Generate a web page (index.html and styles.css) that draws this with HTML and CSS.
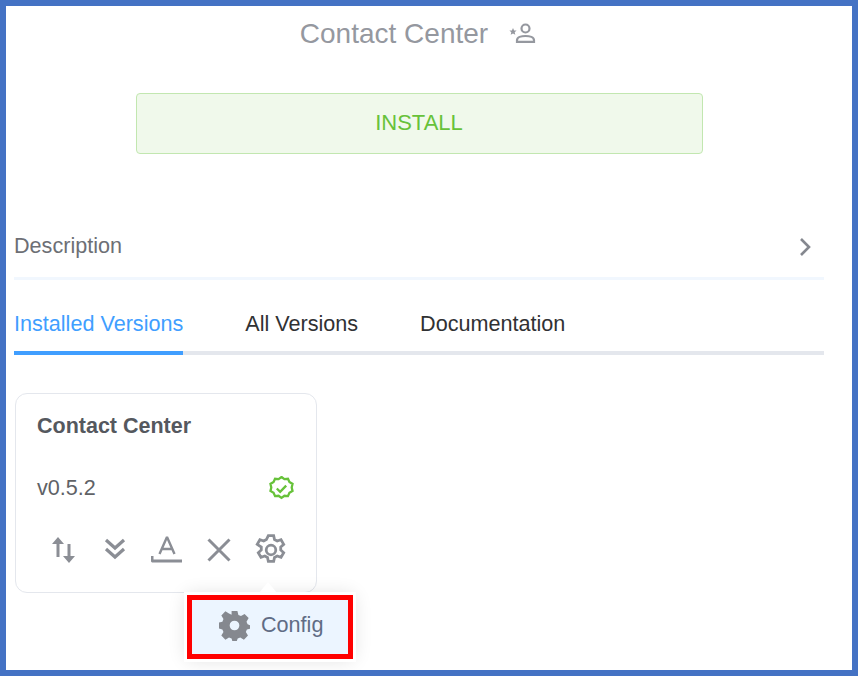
FILE: index.html
```html
<!DOCTYPE html>
<html lang="en">
<head>
  <meta charset="UTF-8">
  <title>Contact Center</title>
  <link rel="stylesheet" href="styles.css">
</head>
<body>
  <main class="frame">
    <div class="title-row">
      <h1>Contact Center</h1>
      <svg class="title-icon" viewBox="0 0 27 20" fill="none" stroke="currentColor" stroke-width="2.200">
        <circle cx="16.500" cy="5.500" r="4"></circle>
        <path d="M8 18.800v-1.600c0-2.800 4.300-4.200 8.500-4.200s8.500 1.400 8.500 4.200v1.600z"></path>
        <path d="M4 5l1.100 2.400 2.500.2-1.900 1.700.6 2.500L4 10.500l-2.300 1.300.6-2.500L.4 7.600l2.500-.2z" fill="currentColor" stroke="none"></path>
      </svg>
    </div>

    <button class="install-btn">INSTALL</button>

    <div class="description">
      <span>Description</span>
      <svg class="chevron" viewBox="0 0 14 20" fill="none" stroke="currentColor" stroke-width="2.600">
        <path d="M3 2l8 8-8 8"></path>
      </svg>
    </div>

    <nav class="tabs">
      <a class="tab active">Installed Versions</a>
      <a class="tab">All Versions</a>
      <a class="tab">Documentation</a>
    </nav>

    <section class="card">
      <h2>Contact Center</h2>
      <div class="version-row">
        <span>v0.5.2</span>
        <svg class="badge" viewBox="0 0 24 24" fill="none" stroke="currentColor" stroke-width="2.200">
          <path d="M12 1l2.800 2 3.400-.3 1.400 3.100 3 1.800-.8 3.400.8 3.400-3 1.800-1.400 3.100-3.400-.3-2.800 2-2.800-2-3.400.3-1.400-3.100-3-1.800.8-3.400-.8-3.400 3-1.800 1.400-3.100 3.400.3z"></path>
          <path d="M7.500 12l3.200 3.200 5.800-6"></path>
        </svg>
      </div>
      <div class="actions">
        <svg class="action" viewBox="0 0 32 32" fill="currentColor">
          <path d="M11 3l6 7h-4.500v13h-3V10H5z"></path>
          <path d="M22 29l-6-7h4.500V10h3v12H28z"></path>
        </svg>
        <svg class="action" viewBox="0 0 32 32" fill="none" stroke="currentColor" stroke-width="3.200">
          <path d="M7 6l9 8 9-8"></path>
          <path d="M7 15l9 8 9-8"></path>
        </svg>
        <svg class="action" viewBox="0 0 32 32" fill="none" stroke="currentColor" stroke-width="2.400" stroke-linejoin="bevel">
          <path d="M8.500 20L16 3l7.500 17M11 15h10"></path>
          <path d="M1 22v5h30" stroke-width="3"></path>
        </svg>
        <svg class="action" viewBox="0 0 32 32" fill="none" stroke="currentColor" stroke-width="3">
          <path d="M5.500 5.500l21 21M26.500 5.500l-21 21"></path>
        </svg>
        <svg class="action" viewBox="1 1 30 30" fill="none" stroke="currentColor" stroke-width="2.600">
          <path d="M13.500 2.500h5l.8 3.700 2.500 1.400 3.600-1.200 2.500 4.300-2.800 2.500v2.800l2.800 2.500-2.500 4.300-3.600-1.200-2.500 1.400-.8 3.700h-5l-.8-3.700-2.500-1.400-3.600 1.200-2.500-4.300 2.800-2.500v-2.800L3.100 10.700l2.500-4.300 3.600 1.200 2.500-1.400z"></path>
          <circle cx="16" cy="16" r="4.500"></circle>
        </svg>
      </div>
    </section>

    <div class="tooltip">
      <div class="tooltip-inner">
        <svg class="config-icon" viewBox="0 0 32 32" fill="currentColor" fill-rule="evenodd">
          <path d="M13 1h6l1 4.200 2.700 1.100 3.700-2.200 4.200 4.200-2.200 3.700 1.100 2.700L33 16v0l0 3-4.200 1-1.100 2.700 2.200 3.700-4.200 4.200-3.700-2.200-2.700 1.100L18 33h-4l-1-3.500-2.700-1.100-3.700 2.200-4.200-4.200 2.200-3.700-1.100-2.700L-1 19v-6l4.500-1 1.100-2.700-2.200-3.700 4.200-4.200 3.700 2.200L13 5zM16 11a5 5 0 100 10 5 5 0 000-10z"></path>
        </svg>
        <span>Config</span>
      </div>
    </div>
  </main>
</body>
</html>
```

FILE: styles.css
```css
* {
  margin: 0;
  padding: 0;
  box-sizing: border-box;
}

body {
  font-family: 'Liberation Sans', Arial, sans-serif;
  background-color: #ffffff;
}

.frame {
  position: relative;
  width: 858px;
  height: 676px;
  border: 6px solid #4472c4;
  padding: 0 28px 0 8px;
  overflow: hidden;
}

.title-row {
  display: flex;
  justify-content: center;
  align-items: center;
  gap: 21px;
  height: 56px;
  color: #95989f;
  padding-right: 2px;
}

h1 {
  font-size: 28px;
  font-weight: 400;
}

.title-icon {
  width: 27px;
  height: 20px;
  margin-bottom: 2px;
}

.install-btn {
  display: block;
  width: 567px;
  height: 61px;
  margin: 31px auto 0;
  padding-bottom: 2px;
  background-color: #f0f9eb;
  border: 1px solid #c2e7b0;
  border-radius: 4px;
  color: #67c23a;
  font-family: inherit;
  font-size: 22px;
}

.description {
  display: flex;
  justify-content: space-between;
  align-items: center;
  height: 66px;
  margin-top: 60px;
  padding: 0 12px 0 0;
  border-bottom: 3px solid #f1f7fe;
  color: #6d6f75;
  font-size: 21.600px;
}

.description span {
  padding-top: 1px;
}

.chevron {
  width: 14px;
  height: 20px;
  margin-top: 2px;
  color: #85888f;
}

.tabs {
  display: flex;
  gap: 62px;
  height: 75px;
  border-bottom: 4px solid #e4e7ed;
}

.tab {
  height: 75px;
  padding-top: 31px;
  font-size: 21.600px;
  color: #303133;
}

.tab.active {
  color: #409eff;
  border-bottom: 4px solid #409eff;
}

.card {
  width: 302px;
  height: 200px;
  margin: 38px 0 0 1px;
  padding: 20px 22px 0 21px;
  border: 1px solid #e4e7ed;
  border-radius: 12px;
}

h2 {
  font-size: 21.500px;
  line-height: 24px;
  color: #55585e;
}

.version-row {
  display: flex;
  justify-content: space-between;
  align-items: center;
  margin-top: 37px;
  font-size: 21.600px;
  color: #606266;
}

.badge {
  width: 25px;
  height: 25px;
  color: #67c23a;
}

.actions {
  display: flex;
  gap: 20px;
  margin-top: 33px;
  padding-left: 10px;
  color: #8b8e95;
}

.action {
  width: 32px;
  height: 32px;
}

/* popover under the gear icon */
.tooltip {
  position: absolute;
  left: 181px;
  top: 589px;
  padding: 5px;
  background-color: #ff0000;
  width: 166px;
  height: 64px;
  box-shadow: 0 0 0 3px #ffffff, 0 0 18px rgba(0, 0, 0, 0.14);
}

.tooltip::before {
  content: "";
  position: absolute;
  left: 72px;
  top: -13px;
  border-left: 9px solid transparent;
  border-right: 9px solid transparent;
  border-bottom: 11px solid #ffffff;
}

.tooltip-inner {
  display: flex;
  align-items: center;
  gap: 11px;
  height: 100%;
  padding: 0 0 4px 27px;
  background-color: #ecf5ff;
  color: #606c85;
  font-size: 21.600px;
}

.config-icon {
  width: 31px;
  height: 31px;
  color: #85888f;
}
```
